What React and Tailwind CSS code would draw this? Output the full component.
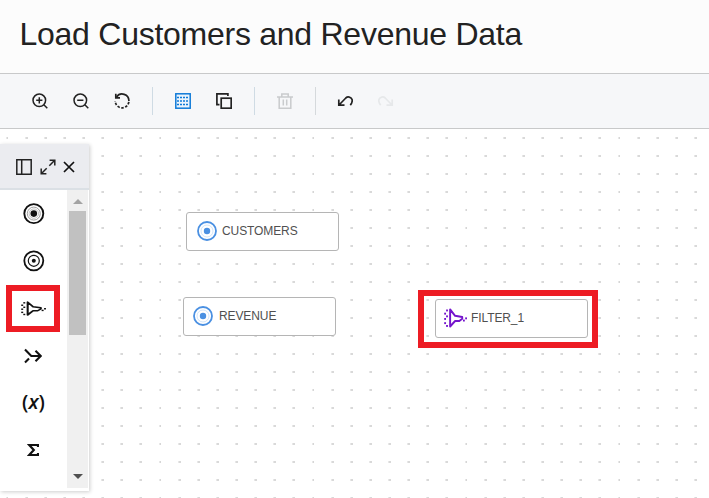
const DOT_COLUMNS = [19, 38, 57, 76, 95, 114, 133];

function DotGrid() {
  return (
    <svg className="absolute inset-0 h-full w-full" shapeRendering="crispEdges">
      <defs>
        <pattern id="dots" x="6" y="8" width="153" height="18" patternUnits="userSpaceOnUse">
          <rect x="0" y="0" width="1" height="2" fill="#e8e8e8" />
          <rect x="1" y="0" width="1" height="2" fill="#d6d6d6" />
          {DOT_COLUMNS.map((x) => (
            <g key={x}>
              <rect x={x} y="0" width="1" height="2" fill="#e8e8e8" />
              <rect x={x + 1} y="0" width="2" height="2" fill="#d9d9d9" />
            </g>
          ))}
        </pattern>
      </defs>
      <rect width="100%" height="100%" fill="url(#dots)" />
    </svg>
  );
}

function Icon({ children, className = "size-4 text-[#222]", viewBox = "0 0 16 16", width = 1.5 }) {
  return (
    <svg
      className={`shrink-0 ${className}`}
      viewBox={viewBox}
      preserveAspectRatio="none"
      fill="none"
      stroke="currentColor"
      strokeWidth={width}
    >
      {children}
    </svg>
  );
}

function Toolbar() {
  return (
    <div className="flex h-[56px] items-center gap-[22px] border-y border-[#c8c9ca] bg-[#f6f7f9] pl-8">
      <div className="flex gap-[25px]">
        <Icon>
          <circle cx="7.3" cy="7.3" r="6.3" />
          <path d="M11.8 11.8l3.5 3.5M4.2 7.3h6.2M7.3 4.2v6.2" />
        </Icon>
        <Icon>
          <circle cx="7.3" cy="7.3" r="6.3" />
          <path d="M11.8 11.8l3.5 3.5M4.2 7.3h6.2" />
        </Icon>
        <Icon width={1.7}>
          <path d="M2.5 4A6.8 6.8 0 0 1 14.9 8" />
          <path d="M14.9 8A6.8 6.8 0 0 1 1.2 8" strokeDasharray="2.5 1.5" strokeDashoffset="-1" />
          <path d="M1.8 .8v4h4.2" />
        </Icon>
      </div>
      <div className="h-7 w-px bg-[#cfdbe4]" />
      <div className="flex gap-[25px]">
        <Icon className="size-4 text-[#0f7ad8]">
          <rect x=".8" y=".8" width="14.4" height="14.4" fill="#eaf4fd" />
          <path d="M2 4.5h12M2 8h12M2 11.5h12" strokeDasharray="2 1" />
        </Icon>
        <Icon width={1.7}>
          <path d="M3.5 11.7H.9V.9h11V3" />
          <rect x="5.2" y="5.2" width="10" height="10" />
        </Icon>
      </div>
      <div className="h-7 w-px bg-[#cfdbe4]" />
      <Icon className="size-4 text-[#c9cbcd]">
        <path d="M0 4h16M4.8 4V1h6.4v3M2.2 4v11.2h11.6V4M6.3 6.5v6M9.7 6.5v6" />
      </Icon>
      <div className="h-7 w-px bg-[#d5d9dc]" />
      <div className="-ml-px flex gap-[25px]">
        <Icon width={1.7}>
          <path d="M1.8 6.5v5.7h5.7M2 12l6.8-7A3.9 3.9 0 0 1 15 6.3c.7 2.3-.2 4-1.7 5.8" />
        </Icon>
        <Icon className="size-4 text-[#e6e8ea]" width={1.7}>
          <path d="M14.2 6.5v5.7H8.5M14 12L7.2 5A3.9 3.9 0 0 0 1 6.3c-.7 2.3.2 4 1.7 5.8" />
        </Icon>
      </div>
    </div>
  );
}

function FilterIcon({ className, width = 2 }) {
  return (
    <Icon className={className} viewBox="0 0 24 20" width={width}>
      <path d="M6.4 1.5v17l5.2-5.5h4.4l3-2.3V9l-7.4-1.2z" strokeLinejoin="round" />
      <g fill="currentColor" stroke="none">
        <rect x="2.2" y="1.5" width="1.9" height="1.9" />
        <rect x=".2" y="4.7" width="1.9" height="1.9" />
        <rect x="2.2" y="7.4" width="1.9" height="1.9" />
        <rect x=".2" y="10" width="1.9" height="1.9" />
        <rect x=".2" y="14.2" width="1.9" height="1.9" />
        <rect x="2.2" y="17" width="1.9" height="1.9" />
        <rect x="19.8" y="11.6" width="1.9" height="1.9" />
        <rect x="22.1" y="9.4" width="1.9" height="1.9" />
      </g>
    </Icon>
  );
}

function PaletteItem({ children }) {
  return <div className="flex h-[47.3px] items-center justify-center">{children}</div>;
}

function Palette() {
  return (
    <div className="absolute left-0 top-[15px] h-[347px] w-[88.5px] bg-white shadow-[1px_1px_4px_rgba(0,0,0,0.2)]">
      <div className="flex h-[46px] items-center gap-2 border-b-2 border-[#dbe0e5] bg-[#ebecf0] pl-4 pt-0.5">
        <Icon>
          <path d="M.8 .8h14.4v14.4H.8zM5.7 .8v14.4" />
        </Icon>
        <Icon className="size-4 text-[#222]">
          <path d="M9.6 1.2h5.2v5.2M14.5 1.5L9.3 6.7M6.4 14.8H1.2V9.6M1.5 14.5l5.2-5.2" />
        </Icon>
        <Icon className="size-3 -ml-px text-[#111]" viewBox="0 0 12 12" width={1.7}>
          <path d="M1 1l10 10M11 1L1 11" />
        </Icon>
      </div>
      <div className="flex h-[298px]">
        <div className="w-[67px] overflow-hidden">
          <PaletteItem>
            <Icon className="size-[22px] text-[#111]" viewBox="0 0 22 22">
              <circle cx="10.8" cy="10.6" r="9.5" strokeWidth="1.9" />
              <circle cx="10.8" cy="10.6" r="6.5" strokeWidth=".8" stroke="#888" />
              <circle cx="10.8" cy="10.6" r="4.7" strokeWidth=".7" stroke="#aaa" />
              <circle cx="10.8" cy="10.6" r="3.3" fill="currentColor" stroke="none" />
            </Icon>
          </PaletteItem>
          <PaletteItem>
            <Icon className="size-[22px] text-[#111]" viewBox="0 0 22 22">
              <circle cx="10.8" cy="10.8" r="9.5" strokeWidth="1.8" />
              <circle cx="10.8" cy="10.8" r="5.5" strokeWidth="1.2" />
              <circle cx="10.8" cy="10.8" r="2" fill="currentColor" stroke="none" />
            </Icon>
          </PaletteItem>
          <PaletteItem>
            <FilterIcon className="h-[15px] w-[25px] text-[#111]" />
          </PaletteItem>
          <PaletteItem>
            <Icon className="mr-px h-4 w-[18px] text-[#111]" viewBox="0 0 18 16" width={2.1}>
              <path d="M1 1.5L7.3 8H16.5M1 14.5l4-4M11.5 2.8L16.7 8l-5.2 5.2" />
            </Icon>
          </PaletteItem>
          <PaletteItem>
            <span className="pb-0.5 font-['Open_Sans',sans-serif] text-[20px] font-semibold leading-none text-[#111]">
              (<i>x</i>)
            </span>
          </PaletteItem>
          <PaletteItem>
            <Icon className="mr-px h-3 w-3 text-[#111]" viewBox="0 0 12 12" width={2.2}>
              <path d="M11 3V1H2.2l4.6 5-4.6 5H11V9" />
            </Icon>
          </PaletteItem>
        </div>
        <div className="flex w-[21px] flex-col items-center bg-[#f0f0f0]">
          <div className="flex h-[21px] items-center pt-0.5">
            <div className="border-x-[5px] border-b-[5px] border-x-transparent border-b-[#a3a3a3]" />
          </div>
          <div className="h-[124px] w-[17px] bg-[#c1c1c1]" />
          <div className="mt-auto mb-[9px] border-x-[5px] border-t-[5px] border-x-transparent border-t-[#505050]" />
        </div>
      </div>
    </div>
  );
}

function SourceIcon() {
  return (
    <Icon className="size-5 text-[#4a90e2]" viewBox="0 0 20 20">
      <circle cx="10" cy="10" r="9" strokeWidth="1.8" />
      <circle cx="10" cy="10" r="6" strokeWidth=".6" stroke="#b4d2f4" />
      <circle cx="10" cy="10" r="3.2" fill="currentColor" stroke="none" />
    </Icon>
  );
}

function Node({ className, icon, label }) {
  return (
    <div
      className={`absolute flex h-[39px] w-[153px] items-center rounded-[3px] border border-[#b5b5b5] bg-white pb-px font-['Liberation_Sans',Arial,sans-serif] text-xs leading-none tracking-[-0.1px] text-[#505050] ${className}`}
    >
      {icon}
      <span>{label}</span>
    </div>
  );
}

export default function App() {
  return (
    <div className="flex h-[498px] w-[709px] flex-col overflow-hidden bg-white font-['Liberation_Sans',Arial,sans-serif]">
      <header className="flex h-[73px] items-center bg-[#fcfcfc] pb-[5px] pl-[19.5px]">
        <h1 className="whitespace-nowrap text-[32px] leading-none tracking-[-0.26px] text-[#222]">
          Load Customers and Revenue Data
        </h1>
      </header>
      <Toolbar />
      <main className="relative flex-1 overflow-hidden bg-white">
        <DotGrid />
        <Node className="left-[186px] top-[83px] gap-[5px] pl-[10px]" icon={<SourceIcon />} label="CUSTOMERS" />
        <Node className="left-[183px] top-[168.4px] gap-[6px] pl-[9px]" icon={<SourceIcon />} label="REVENUE" />
        <Node
          className="left-[435px] top-[169.5px] gap-1 pl-2"
          icon={<FilterIcon className="h-5 w-[23px] text-[#7414cc]" />}
          label="FILTER_1"
        />
        <Palette />
        <div className="absolute left-[6px] top-[156px] h-[47px] w-[54px] border-[6px] border-[#ed1c24]" />
        <div className="absolute left-[418px] top-[161px] h-[58px] w-[180px] border-[6px] border-[#ed1c24]" />
      </main>
    </div>
  );
}
